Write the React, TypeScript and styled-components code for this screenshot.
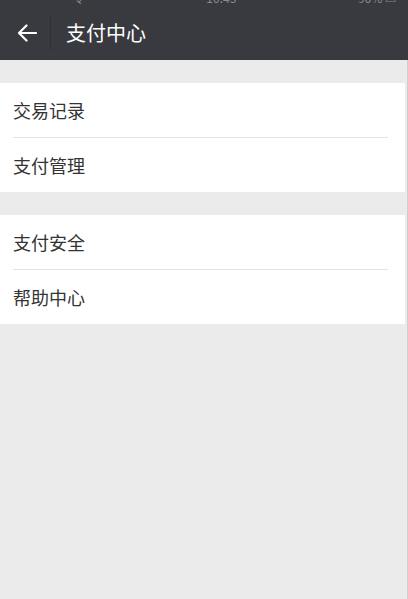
import styled, { createGlobalStyle } from 'styled-components';

const GlobalStyle = createGlobalStyle`
  html, body {
    margin: 0;
    padding: 0;
    background: #ebebeb;
  }
  body {
    font-family: "Noto Sans CJK SC", "Noto Sans", "Liberation Sans", sans-serif;
  }
`;

const Page = styled.div`
  width: 408px;
  min-height: 599px;
  background: #ebebeb;
  display: flex;
  flex-direction: column;
  box-shadow: inset -3px 0 0 -2px #cfcfcf;
`;

const Header = styled.header`
  background: #393a3f;
  display: flex;
  flex-direction: column;
`;

const StatusStrip = styled.div`
  height: 5px;
  overflow: hidden;
  display: flex;
  justify-content: space-between;
  padding: 0 12px 0 10px;
  color: #8a8b8f;
  font-size: 12px;
  line-height: 12px;
`;

const StatusText = styled.span`
  margin-top: -8px;
`;

const NavBar = styled.div`
  height: 55px;
  display: flex;
  align-items: center;
`;

const BackButton = styled.button`
  width: 50px;
  height: 100%;
  padding: 0 0 0 3px;
  border: 0;
  background: transparent;
  display: flex;
  align-items: center;
  justify-content: center;
  cursor: pointer;
`;

const Separator = styled.span`
  width: 1px;
  height: 34px;
  background: #2f3034;
  margin-right: 15px;
`;

const Title = styled.h1`
  margin: 0;
  color: #ffffff;
  font-size: 20px;
  font-weight: 400;
`;

const Group = styled.ul`
  list-style: none;
  margin: 23px 0 0;
  padding: 0;
  background: #ffffff;
  width: 405px;
`;

const Row = styled.li<{ $last?: boolean }>`
  box-sizing: border-box;
  height: ${({ $last }) => ($last ? '54px' : '55px')};
  margin-left: 13px;
  margin-right: 17px;
  padding-bottom: ${({ $last }) => ($last ? '0' : '1px')};
  display: flex;
  align-items: center;
  color: #333333;
  font-size: 18px;
  border-bottom: ${({ $last }) => ($last ? '0' : '1px solid #e3e3e3')};
`;

const groups = [
  ['交易记录', '支付管理'],
  ['支付安全', '帮助中心'],
];

export default function App() {
  return (
    <>
      <GlobalStyle />
      <Page>
        <Header>
          <StatusStrip>
            <StatusText>••••• 令</StatusText>
            <StatusText>10:45</StatusText>
            <StatusText>96% ▭</StatusText>
          </StatusStrip>
          <NavBar>
            <BackButton aria-label="返回">
              <svg width="20" height="18" viewBox="0 0 20 18" fill="none">
                <path
                  d="M19 9H2M9.5 1.5L2 9l7.5 7.5"
                  stroke="#ffffff"
                  strokeWidth="2.2"
                  strokeLinecap="round"
                  strokeLinejoin="round"
                />
              </svg>
            </BackButton>
            <Separator />
            <Title>支付中心</Title>
          </NavBar>
        </Header>
        {groups.map((items, gi) => (
          <Group key={gi}>
            {items.map((label, i) => (
              <Row key={label} $last={i === items.length - 1}>
                {label}
              </Row>
            ))}
          </Group>
        ))}
      </Page>
    </>
  );
}
